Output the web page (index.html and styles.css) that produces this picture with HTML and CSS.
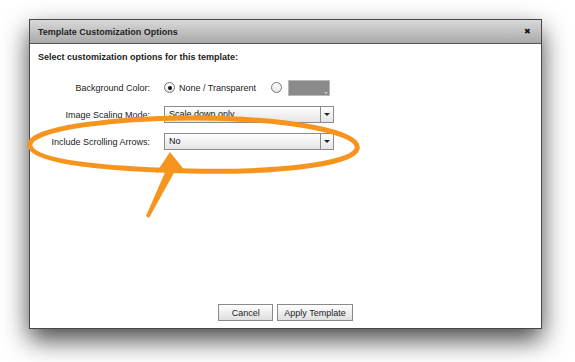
FILE: index.html
```html
<!DOCTYPE html>
<html lang="en">
<head>
    <meta charset="UTF-8" />
    <title>Template Customization Options</title>
    <link rel="stylesheet" href="styles.css">
</head>
<body>
    <div class="dialog">
        <div class="titlebar">
            <span class="title">Template Customization Options</span>
            <span class="close">&#x2716;</span>
        </div>
        <div class="content">
            <div class="intro">Select customization options for this template:</div>

            <div class="row">
                <label class="label">Background Color:</label>
                <div class="controls">
                    <span class="radio checked"></span>
                    <span class="radio-text">None / Transparent</span>
                    <span class="radio second"></span>
                    <span class="swatch"></span>
                </div>
            </div>
            <div class="row">
                <label class="label">Image Scaling Mode:</label>
                <div class="select">
                    <span class="value">Scale down only</span>
                    <span class="arrow"></span>
                </div>
            </div>
            <div class="row">
                <label class="label">Include Scrolling Arrows:</label>
                <div class="select">
                    <span class="value">No</span>
                    <span class="arrow"></span>
                </div>
            </div>
        </div>
        <div class="buttons">
            <button class="btn btn-cancel">Cancel</button>
            <button class="btn">Apply Template</button>
        </div>
    </div>

    <!-- orange callout drawn over the dialog -->
    <svg class="callout" width="575" height="362" viewBox="0 0 575 362">
        <path d="M30 146 C 26 128, 120 117, 200 118 C 290 119, 362 132, 357 149 C 352 165, 270 173, 190 171 C 100 169, 34 162, 30 146 Z"
              fill="none" stroke="#f7941e" stroke-width="5"/>
        <polygon points="170,152 186,172 175,171 149,218 146,216 166,170 156,173" fill="#f7941e"/>
    </svg>
</body>
</html>
```

FILE: styles.css
```css
html, body {
    height: 100%;
}
body {
    margin: 0;
    min-height: 362px;
    overflow: hidden;
    background: #ffffff;
    font-family: "Liberation Sans", Arial, sans-serif;
    font-size: 9px;
    color: #222;
}

.dialog {
    width: 511px;
    height: 308px;
    margin: 19px 0 0 29px;
    border: 1px solid #474747;
    background: #fff;
    box-shadow: 0 11px 24px rgba(0,0,0,0.72);
    display: flex;
    flex-direction: column;
}

.titlebar {
    height: 23px;
    display: flex;
    align-items: center;
    justify-content: space-between;
    padding: 0 10px 0 8px;
    background: linear-gradient(#d9d9d9, #a9a9a9);
    border-bottom: 1px solid #555;
}
.title {
    font-weight: bold;
    font-size: 9px;
    color: #1e1e1e;
}
.close {
    font-size: 8px;
    color: #111;
}

.content {
    flex: 1;
    padding: 8px 8px 0 8px;
}
.intro {
    font-weight: bold;
    font-size: 9px;
    margin-bottom: 17px;
}

.row {
    display: flex;
    align-items: center;
    height: 17px;
    margin-bottom: 10px;
}
.label {
    width: 112px;
    text-align: right;
    padding-right: 14px;
    color: #222;
}

.controls {
    display: flex;
    align-items: center;
}
.radio {
    width: 9px;
    height: 9px;
    border: 1px solid #777;
    border-radius: 50%;
    background: linear-gradient(#fff, #e6e6e6);
    position: relative;
    flex-shrink: 0;
}
.radio.checked::after {
    content: "";
    position: absolute;
    left: 2.5px;
    top: 2.5px;
    width: 4px;
    height: 4px;
    border-radius: 50%;
    background: #111;
}
.radio-text {
    margin-left: 4px;
}
.radio.second {
    margin-left: 15px;
}
.swatch {
    margin-left: 6px;
    width: 40px;
    height: 14px;
    flex-shrink: 0;
    background: #8a8a8a;
    border: 1px solid #b8b8b8;
    position: relative;
}
.swatch::after {
    content: "";
    position: absolute;
    right: 1px;
    bottom: 1px;
    border-left: 2px solid transparent;
    border-right: 2px solid transparent;
    border-top: 2px solid #ccc;
}

.select {
    width: 168px;
    height: 15px;
    display: flex;
    border: 1px solid #8c8c8c;
    background: linear-gradient(#ffffff, #e4e4e4);
}
.select .value {
    flex: 1;
    padding-left: 4px;
    line-height: 15px;
    color: #111;
}
.select .arrow {
    width: 12px;
    border-left: 1px solid #8c8c8c;
    display: flex;
    align-items: center;
    justify-content: center;
}
.select .arrow::after {
    content: "";
    border-left: 3px solid transparent;
    border-right: 3px solid transparent;
    border-top: 3px solid #222;
}

.buttons {
    display: flex;
    justify-content: center;
    gap: 4px;
    padding-bottom: 7px;
}
.btn {
    height: 17px;
    padding: 0 6px;
    font-family: "Liberation Sans", Arial, sans-serif;
    font-size: 9px;
    color: #222;
    border: 1px solid #8a8a8a;
    background: linear-gradient(#ffffff, #dedede);
}
.btn-cancel {
    width: 55px;
}

.callout {
    position: absolute;
    left: 0;
    top: 0;
    pointer-events: none;
}
```
